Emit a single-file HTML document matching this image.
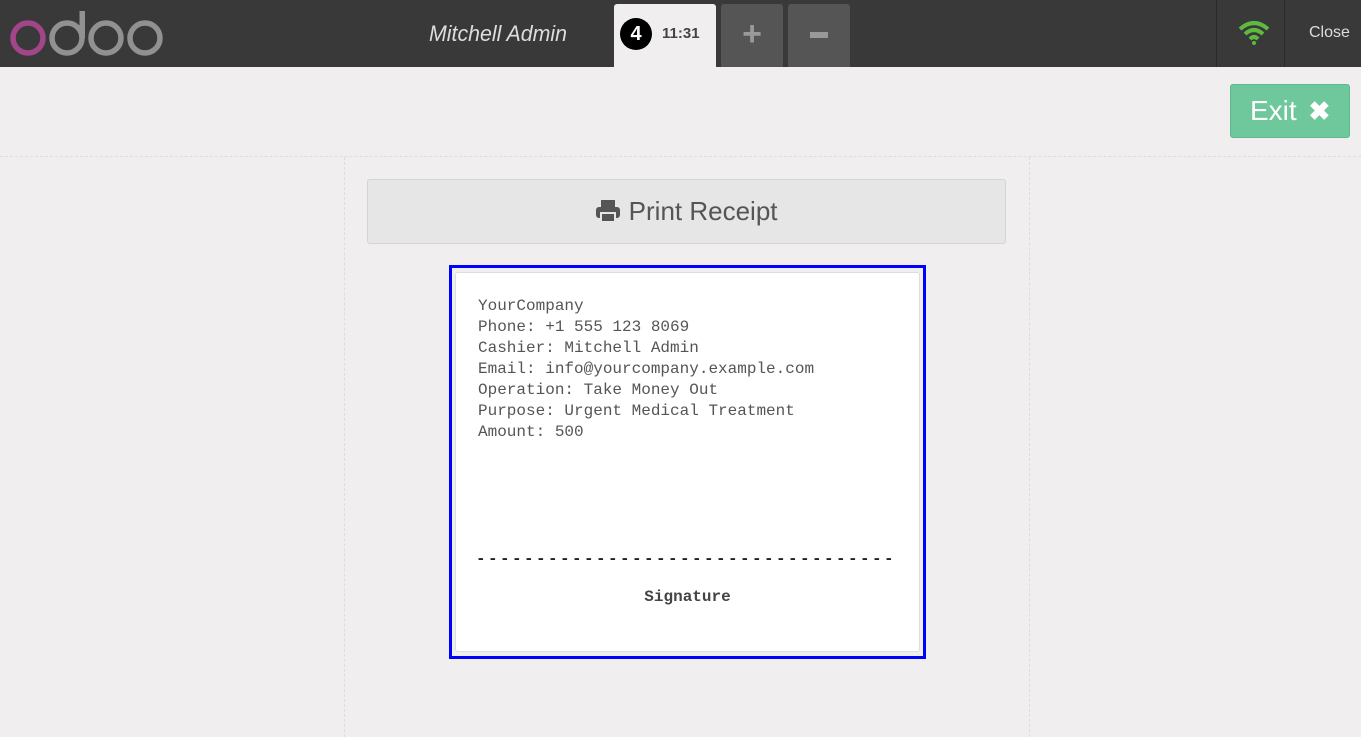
<!DOCTYPE html>
<html><head><meta charset="utf-8"><style>
*{box-sizing:border-box;margin:0;padding:0}
body{width:1361px;height:736px;background:#f0eeee;font-family:"Liberation Sans",sans-serif;position:relative;overflow:hidden}
.hdr{position:absolute;left:0;top:0;width:1361px;height:67px;background:#393939}
.abs{position:absolute}
</style></head><body>
<div class="hdr">
 <svg class="abs" style="left:8px;top:8px" width="160" height="48" viewBox="0 0 160 48">
  <circle cx="20" cy="30" r="15" fill="none" stroke="#a24689" stroke-width="5.5"/>
  <circle cx="59" cy="30" r="15" fill="none" stroke="#919191" stroke-width="5.5"/>
  <rect x="71.5" y="3" width="5.5" height="27" fill="#919191"/>
  <circle cx="98" cy="30" r="15" fill="none" stroke="#919191" stroke-width="5.5"/>
  <circle cx="137" cy="30" r="15" fill="none" stroke="#919191" stroke-width="5.5"/>
 </svg>
 <div class="abs" style="left:429px;top:21px;font-size:22px;font-style:italic;color:#ddd;transform:scaleX(0.97);transform-origin:left">Mitchell Admin</div>
 <div class="abs" style="left:614px;top:4px;width:102px;height:63px;background:#f0eeee;border-radius:3px 3px 0 0"></div>
 <div class="abs" style="left:620px;top:18px;width:32px;height:32px;border-radius:50%;background:#000;color:#fff;font-weight:bold;font-size:20px;text-align:center;line-height:32px">4</div>
 <div class="abs" style="left:662px;top:25px;font-size:15px;font-weight:bold;color:#444">11:31</div>
 <div class="abs" style="left:721px;top:4px;width:62px;height:63px;background:#555;border-radius:3px 3px 0 0;color:#999;font-size:34px;font-weight:bold;text-align:center;line-height:60px">+</div>
 <div class="abs" style="left:788px;top:4px;width:62px;height:63px;background:#555;border-radius:3px 3px 0 0"><div class="abs" style="left:22px;top:28px;width:18px;height:6px;background:#999"></div></div>
 <div class="abs" style="left:1216px;top:0;width:1px;height:67px;background:#2a2a2a"></div>
 <div class="abs" style="left:1284px;top:0;width:1px;height:67px;background:#2a2a2a"></div>
 <svg class="abs" style="left:1238px;top:20px" width="32" height="26" viewBox="0 0 32 26">
  <path d="M2 9 Q16 -3 30 9" fill="none" stroke="#5dba3f" stroke-width="4"/>
  <path d="M7 14 Q16 6 25 14" fill="none" stroke="#5dba3f" stroke-width="4"/>
  <path d="M12 19 Q16 15 20 19" fill="none" stroke="#5dba3f" stroke-width="4"/>
  <circle cx="16" cy="23" r="2" fill="#5dba3f"/>
 </svg>
 <div class="abs" style="left:1309px;top:24px;font-size:16px;color:#ddd">Close</div>
</div>
<div class="abs" style="left:1230px;top:84px;width:120px;height:54px;background:#6ec89b;border:1px solid #5fb88b;border-radius:3px;color:#fff;font-size:28px;line-height:52px;padding-left:19px">Exit <span style="font-weight:bold;font-size:26px;margin-left:4px">✖</span></div>
<div class="abs" style="left:0;top:156px;width:1361px;border-top:1px dashed #ddd"></div>
<div class="abs" style="left:344px;top:157px;height:580px;border-left:1px dashed #ddd"></div>
<div class="abs" style="left:1029px;top:157px;height:580px;border-left:1px dashed #ddd"></div>
<div class="abs" style="left:367px;top:179px;width:639px;height:65px;background:#e6e6e6;border:1px solid #d4d4d4;border-radius:3px;text-align:center;font-size:26px;color:#555;line-height:63px">
 <svg width="26" height="24" viewBox="0 0 26 24" style="vertical-align:-3px"><rect x="6" y="1" width="14" height="8" fill="#555"/><rect x="1" y="8" width="24" height="11" rx="3" fill="#555"/><rect x="6" y="14" width="14" height="9" fill="#555" stroke="#e6e6e6" stroke-width="2"/></svg> Print Receipt</div>
<div class="abs" style="left:449px;top:265px;width:477px;height:394px;border:3px solid #0000ff;background:#f0eeee">
 <div class="abs" style="left:3px;top:4px;width:465px;height:380px;background:#fff;border:1px solid #ddd;border-radius:3px"></div>
</div>
<div class="abs" style="left:478px;top:296px;font-family:'Liberation Mono',monospace;font-size:16px;line-height:21px;color:#555;white-space:pre">YourCompany
Phone: +1 555 123 8069
Cashier: Mitchell Admin
Email: info@yourcompany.example.com
Operation: Take Money Out
Purpose: Urgent Medical Treatment
Amount: 500</div>
<div class="abs" style="left:476px;top:550px;font-family:'Liberation Mono',monospace;font-weight:bold;font-size:16px;color:#222;letter-spacing:2.4px;white-space:pre">-----------------------------------</div>
<div class="abs" style="left:455px;top:588px;width:465px;text-align:center;font-family:'Liberation Mono',monospace;font-weight:bold;font-size:16px;color:#444">Signature</div>
</body></html>
